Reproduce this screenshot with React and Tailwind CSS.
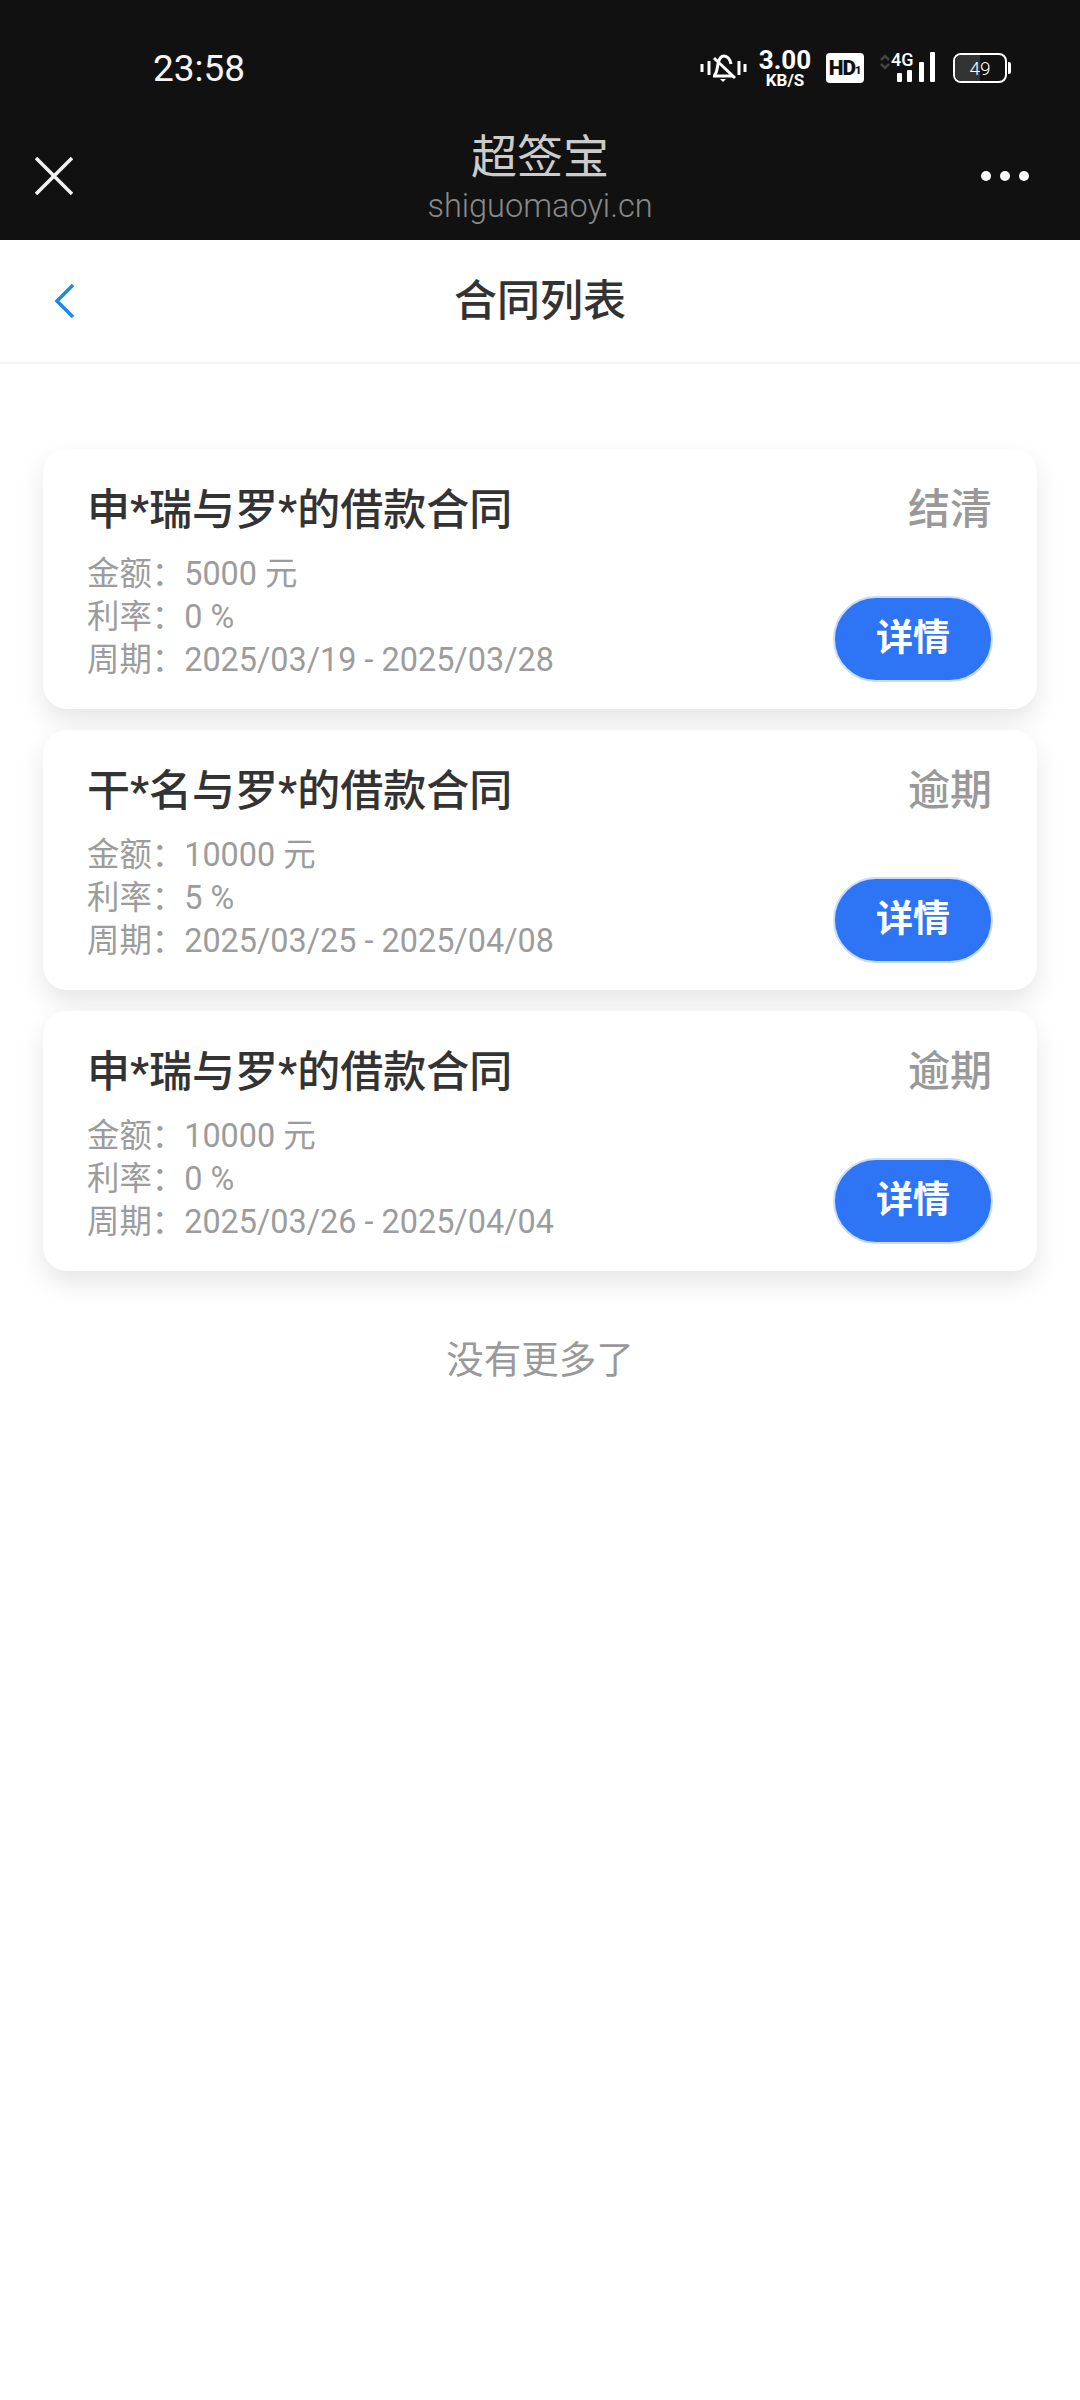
const FONT = "font-['Roboto','Noto_Sans_CJK_SC',sans-serif]";

const contracts = [
  { title: "申*瑞与罗*的借款合同", status: "结清", amount: "5000 元", rate: "0 %", period: "2025/03/19 - 2025/03/28" },
  { title: "干*名与罗*的借款合同", status: "逾期", amount: "10000 元", rate: "5 %", period: "2025/03/25 - 2025/04/08" },
  { title: "申*瑞与罗*的借款合同", status: "逾期", amount: "10000 元", rate: "0 %", period: "2025/03/26 - 2025/04/04" },
];

const MuteBell = () => (
  <svg width="47" height="32" viewBox="0 0 47 32" fill="none" stroke="white" strokeWidth="3">
    <path d="M2 12v8M9 9v14M39 9v14M45 12v8" />
    <path d="M13 24h20M14 24c3-3 3-7 4-12 1-5 3-8 6-8s6 3 7 8" strokeLinejoin="round" />
    <path d="M14 6l21 20" />
    <path d="M20 27h6l-3 3z" fill="white" stroke="none" />
  </svg>
);

const HdBadge = () => (
  <div className="flex h-[30px] w-[38px] items-center justify-center rounded-[4px] bg-white">
    <span className="text-[21px] font-black leading-none tracking-[-1px] text-[#111111]">HD</span>
    <span className="mt-[4px] text-[11px] font-black leading-none text-[#111111]">1</span>
  </div>
);

const Signal = () => (
  <div className="relative h-[32px] w-[56px]">
    <svg className="absolute left-0 top-[2px]" width="10" height="16" viewBox="0 0 10 16" fill="none" stroke="#444444" strokeWidth="2.500">
      <path d="M1 6l4-4 4 4M1 10l4 4 4-4" />
    </svg>
    <span className="absolute left-[11px] top-0 text-[18px] font-medium leading-[16px] text-white">4G</span>
    <svg className="absolute left-[17px] top-0" width="39" height="31" viewBox="0 0 39 31" fill="white">
      <rect x="0" y="21" width="5" height="9" rx="1" />
      <rect x="10" y="18" width="5" height="12" rx="1" />
      <rect x="22" y="10" width="5" height="20" rx="1" />
      <rect x="33" y="0" width="5" height="30" rx="1" />
    </svg>
  </div>
);

const Battery = () => (
  <div className="flex items-center gap-[1px]">
    <div className="relative flex h-[30px] w-[54px] items-center justify-center overflow-hidden rounded-[8px] border-2 border-white">
      <div className="absolute inset-y-0 left-0 w-[25px] bg-[#333333]" />
      <span className="relative text-[19px] font-light leading-none text-white">49</span>
    </div>
    <div className="h-[12px] w-[3px] rounded-r-[2px] bg-white" />
  </div>
);

const ContractCard = ({ item }) => (
  <div className="h-[260px] rounded-[24px] bg-white pl-[44px] pr-[44px] pt-[33px] shadow-[0_12px_26px_rgba(0,0,0,0.1)]">
    <div className="flex h-[56px] items-center justify-between">
      <span className="text-[43px] font-medium leading-[56px] text-[#333333]">{item.title}</span>
      <span className="mr-[1px] text-[42px] font-medium leading-[56px] text-[#999999]">{item.status}</span>
    </div>
    <div className="mt-[15px] flex items-start justify-between">
      <div className="text-[32.400px] leading-[43px] text-[#9c9c9c]">
        <div>金额：{item.amount}</div>
        <div>利率：{item.rate}</div>
        <div>周期：{item.period}</div>
      </div>
      <button className="mt-[43px] h-[86px] w-[160px] rounded-full border-2 border-[#c9dcfb] bg-[#2e75f6] text-[37px] font-semibold text-white">
        详情
      </button>
    </div>
  </div>
);

export default function App() {
  return (
    <div className={`${FONT} min-h-[2400px] bg-white`}>
      {/* browser chrome */}
      <div className="h-[240px] bg-[#111111]">
        <div className="flex h-[136px] items-center justify-between pl-[153px] pr-[69px]">
          <span className="text-[37px] leading-none text-[#f5f5f5]">23:58</span>
          <div className="flex items-center">
            <MuteBell />
            <div className="ml-[12px] flex w-[52px] flex-col items-center">
              <span className="text-[26px] font-bold leading-[24px] text-white">3.00</span>
              <span className="text-[17px] font-bold leading-[16px] text-white">KB/S</span>
            </div>
            <div className="ml-[15px]"><HdBadge /></div>
            <div className="ml-[16px]"><Signal /></div>
            <div className="ml-[17px]"><Battery /></div>
          </div>
        </div>
        <div className="relative flex h-[104px] flex-col items-center">
          <svg className="absolute left-[35px] top-[21px]" width="38" height="38" viewBox="0 0 38 38" fill="none" stroke="#f2f2f2" strokeWidth="3.500">
            <path d="M1 1l36 36M37 1L1 37" />
          </svg>
          <span className="-mt-[4px] text-[46px] leading-[50px] text-[#cccccc]">超签宝</span>
          <span className="mt-[6px] text-[32.500px] font-light leading-[36px] text-[#8a8a8a]">shiguomaoyi.cn</span>
          <div className="absolute right-[51px] top-[35px] flex gap-[9px]">
            <div className="h-[10px] w-[10px] rounded-full bg-white" />
            <div className="h-[10px] w-[10px] rounded-full bg-white" />
            <div className="h-[10px] w-[10px] rounded-full bg-white" />
          </div>
        </div>
      </div>

      {/* page title */}
      <div className="relative flex h-[124px] items-center justify-center border-b-2 border-[#f3f3f3]">
        <svg className="absolute left-[54px] top-[43px]" width="22" height="36" viewBox="0 0 22 36" fill="none" stroke="#1f87e8" strokeWidth="3.500">
          <path d="M19 2L3 18l16 16" />
        </svg>
        <span className="text-[43px] font-medium text-[#333333]">合同列表</span>
      </div>

      <div className="flex flex-col gap-[21px] px-[43px] pt-[85px]">
        {contracts.map((item, i) => (
          <ContractCard key={i} item={item} />
        ))}
      </div>

      <div className="mt-[64px] text-center text-[37.500px] leading-[50px] text-[#999999]">没有更多了</div>
    </div>
  );
}
